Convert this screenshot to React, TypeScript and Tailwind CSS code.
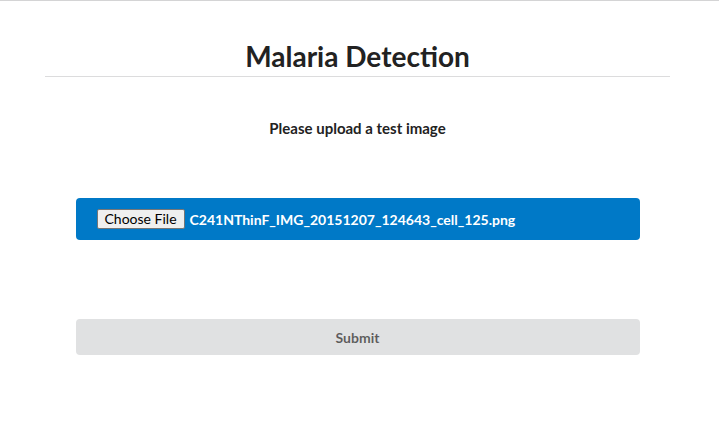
export default function App() {
  return (
    <div className="min-h-[447px] bg-white border-t border-[#d4d4d5]" style={{ fontFamily: "Lato, 'Helvetica Neue', Arial, sans-serif" }}>
      <div className="w-[715px]">
        <div className="w-[625px] mx-auto pt-[36px]">
          <h1 className="text-center text-[28px] leading-[38px] font-bold text-[#222] pb-[1px] border-b border-[#dcdcdd]">
            Malaria Detection
          </h1>
        </div>
        <div className="w-[564px] mx-auto">
          <p className="text-center text-[15px] font-bold text-[#222] mt-[41px] leading-[20px]">Please upload a test image</p>
          <div className="mt-[60px] h-[42px] bg-[#0079c7] rounded-[4px] flex items-center pl-[21px]">
            <span className="h-[20px] px-[7px] flex items-center text-[14px] text-black bg-[#efefef] border border-[#767676] rounded-[2px] leading-none">Choose File</span>
            <span className="ml-[5px] text-[14px] font-bold text-white">C241NThinF_IMG_20151207_124643_cell_125.png</span>
          </div>
          <button className="mt-[79px] w-full h-[36px] bg-[#e0e1e2] rounded-[4px] text-[14px] font-bold text-[rgba(0,0,0,0.6)]">
            Submit
          </button>
        </div>
      </div>
    </div>
  );
}
